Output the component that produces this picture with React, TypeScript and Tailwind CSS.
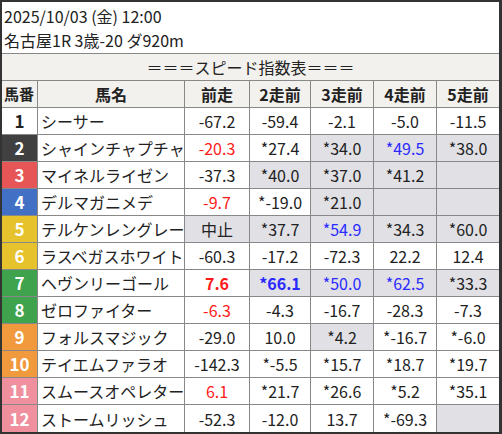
type Cell = { v: string; c?: 'r' | 'b'; bold?: boolean; g?: boolean };

type Row = { no: number; name: string; numCls: string; cells: Cell[] };

const rows: Row[] = [
  {
    no: 1,
    name: 'シーサー',
    numCls: 'bg-white text-[#222]',
    cells: [{ v: '-67.2' }, { v: '-59.4' }, { v: '-2.1' }, { v: '-5.0' }, { v: '-11.5' }],
  },
  {
    no: 2,
    name: 'シャインチャプチャ',
    numCls: 'bg-[#404040] text-white',
    cells: [
      { v: '-20.3', c: 'r' },
      { v: '*27.4' },
      { v: '*34.0', g: true },
      { v: '*49.5', c: 'b', g: true },
      { v: '*38.0', g: true },
    ],
  },
  {
    no: 3,
    name: 'マイネルライゼン',
    numCls: 'bg-[#e65656] text-white',
    cells: [
      { v: '-37.3' },
      { v: '*40.0', g: true },
      { v: '*37.0', g: true },
      { v: '*41.2', g: true },
      { v: '', g: true },
    ],
  },
  {
    no: 4,
    name: 'デルマガニメデ',
    numCls: 'bg-[#4170c4] text-white',
    cells: [
      { v: '-9.7', c: 'r' },
      { v: '*-19.0' },
      { v: '*21.0', g: true },
      { v: '', g: true },
      { v: '', g: true },
    ],
  },
  {
    no: 5,
    name: 'テルケンレングレー',
    numCls: 'bg-[#e6c22c] text-white',
    cells: [
      { v: '中止', g: true },
      { v: '*37.7', g: true },
      { v: '*54.9', c: 'b', g: true },
      { v: '*34.3', g: true },
      { v: '*60.0', g: true },
    ],
  },
  {
    no: 6,
    name: 'ラスベガスホワイト',
    numCls: 'bg-[#e6c22c] text-white',
    cells: [{ v: '-60.3' }, { v: '-17.2' }, { v: '-72.3' }, { v: '22.2' }, { v: '12.4' }],
  },
  {
    no: 7,
    name: 'ヘヴンリーゴール',
    numCls: 'bg-[#3fa34d] text-white',
    cells: [
      { v: '7.6', c: 'r', bold: true },
      { v: '*66.1', c: 'b', bold: true, g: true },
      { v: '*50.0', c: 'b', g: true },
      { v: '*62.5', c: 'b', g: true },
      { v: '*33.3', g: true },
    ],
  },
  {
    no: 8,
    name: 'ゼロファイター',
    numCls: 'bg-[#3fa34d] text-white',
    cells: [{ v: '-6.3', c: 'r' }, { v: '-4.3' }, { v: '-16.7' }, { v: '-28.3' }, { v: '-7.3' }],
  },
  {
    no: 9,
    name: 'フォルスマジック',
    numCls: 'bg-[#f0993d] text-white',
    cells: [{ v: '-29.0' }, { v: '10.0' }, { v: '*4.2', g: true }, { v: '*-16.7' }, { v: '*-6.0' }],
  },
  {
    no: 10,
    name: 'テイエムファラオ',
    numCls: 'bg-[#f0993d] text-white',
    cells: [{ v: '-142.3' }, { v: '*-5.5' }, { v: '*15.7' }, { v: '*18.7' }, { v: '*19.7' }],
  },
  {
    no: 11,
    name: 'スムースオペレター',
    numCls: 'bg-[#f0909f] text-white',
    cells: [{ v: '6.1', c: 'r' }, { v: '*21.7' }, { v: '*26.6' }, { v: '*5.2' }, { v: '*35.1' }],
  },
  {
    no: 12,
    name: 'ストームリッシュ',
    numCls: 'bg-[#f0909f] text-white',
    cells: [{ v: '-52.3' }, { v: '-12.0' }, { v: '13.7' }, { v: '*-69.3' }, { v: '', g: true }],
  },
];

const heads = ['前走', '2走前', '3走前', '4走前', '5走前'];

const grid = 'grid grid-cols-[36px_147px_65px_61px_63px_63px_62px]';

export default function App() {
  return (
    <div
      className="w-[502px] h-[434px] bg-white border-l-2 border-t-2 border-r-[3px] border-b-2 border-[#333] text-[16px] text-[#222] overflow-hidden"
      style={{ fontFamily: '"Noto Sans CJK JP", "Noto Sans", sans-serif' }}
    >
      {/* title */}
      <div className="h-[52px] border-b border-[#888] px-[2px] pt-[2px] leading-[24px]">
        <div>2025/10/03 (金) 12:00</div>
        <div>名古屋1R 3歳-20 ダ920m</div>
      </div>

      <div className="h-[27px] border-b border-[#888] bg-[#f2f1ed] flex items-center justify-center">
        ＝＝＝スピード指数表＝＝＝
      </div>

      {/* header */}
      <div className={`${grid} h-[27px] border-b border-[#888] bg-[#f2f1ed] font-bold`}>
        <div className="border-r border-[#888] flex items-center pl-[2px] text-[15px]">馬番</div>
        <div className="border-r border-[#888] flex items-center justify-center">馬名</div>
        {heads.map((h, i) => (
          <div
            key={h}
            className={`flex items-center justify-center ${i < 4 ? 'border-r border-[#888]' : ''}`}
          >
            {h}
          </div>
        ))}
      </div>

      {rows.map((r, ri) => (
        <div
          key={r.no}
          className={`${grid} h-[27px] ${ri < rows.length - 1 ? 'border-b border-[#888]' : ''}`}
        >
          <div
            className={`${r.numCls} border-r border-[#888] flex items-center justify-center font-bold text-[17px]`}
          >
            {r.no}
          </div>
          <div className="border-r border-[#888] flex items-center pl-[3px] whitespace-nowrap overflow-hidden">
            {r.name}
          </div>
          {r.cells.map((c, ci) => (
            <div
              key={ci}
              className={`flex items-center justify-center whitespace-nowrap ${
                ci < 4 ? 'border-r border-[#888]' : ''
              } ${c.g ? 'bg-[#e0e0e5]' : 'bg-white'} ${
                c.c === 'r' ? 'text-[#ff1a1a]' : c.c === 'b' ? 'text-[#2a2aff]' : ''
              } ${c.bold ? 'font-bold' : ''}`}
            >
              {c.v}
            </div>
          ))}
        </div>
      ))}
    </div>
  );
}
